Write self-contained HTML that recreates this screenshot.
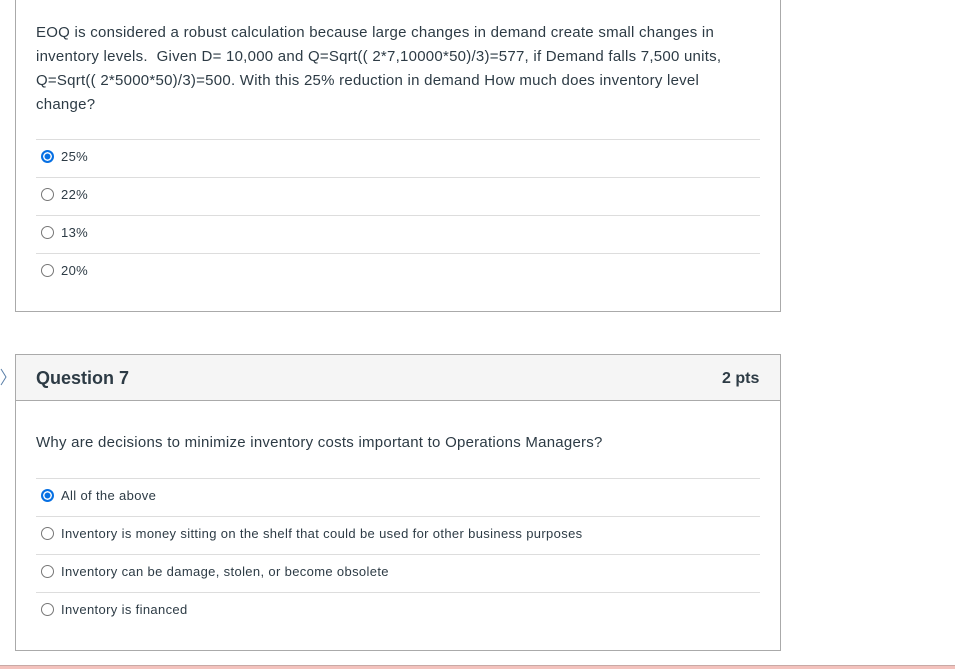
<!DOCTYPE html>
<html><head><style>
body{margin:0;width:955px;height:668px;background:#fff;position:relative;overflow:hidden;font-family:"Liberation Sans",sans-serif;color:#2d3b45}
.box{position:absolute;left:15px;width:764px;border:1px solid #aaa;background:#fff}
.t{position:absolute;left:36px;font-size:15px;white-space:nowrap;letter-spacing:0.25px}
.line{position:absolute;left:36px;width:724px;height:1px;background:#ddd}
.opt{position:absolute;left:41px;font-size:13px;white-space:nowrap;line-height:16px;letter-spacing:0.35px}
.r{display:inline-block;width:13px;height:13px;border:1px solid #777;border-radius:50%;vertical-align:-2px;margin-right:7px;box-sizing:border-box}
.r.on{border:2px solid #0770e3;background:#0770e3;box-shadow:inset 0 0 0 1.5px #fff}
</style></head><body>
<div class="box" style="top:-2px;height:312px"></div>
<div class="t" style="top:21px;line-height:24px">EOQ is considered a robust calculation because large changes in demand create small changes in<br>inventory levels.&nbsp; Given D= 10,000 and Q=Sqrt(( 2*7,10000*50)/3)=577, if Demand falls 7,500 units,<br>Q=Sqrt(( 2*5000*50)/3)=500. With this 25% reduction in demand How much does inventory level<br>change?</div>
<div class="line" style="top:139px"></div>
<div class="opt" style="top:149px"><span class="r on"></span>25%</div>
<div class="line" style="top:177px"></div>
<div class="opt" style="top:187px"><span class="r"></span>22%</div>
<div class="line" style="top:215px"></div>
<div class="opt" style="top:225px"><span class="r"></span>13%</div>
<div class="line" style="top:253px"></div>
<div class="opt" style="top:263px"><span class="r"></span>20%</div>

<svg style="position:absolute;left:0;top:368px" width="8" height="18"><path d="M1 1 L6 9 L1 17" stroke="#5a7fa8" fill="none" stroke-width="1"/></svg>
<div class="box" style="top:354px;height:295px"></div>
<div style="position:absolute;left:16px;top:355px;width:764px;height:45px;background:#f5f5f5;border-bottom:1px solid #aaa"></div>
<div class="t" style="top:367px;font-size:18px;font-weight:bold;line-height:22px;letter-spacing:0">Question 7</div>
<div class="t" style="top:369px;left:722px;font-size:16px;font-weight:bold;line-height:20px;letter-spacing:0">2 pts</div>
<div class="t" style="top:433px;line-height:20px">Why are decisions to minimize inventory costs important to Operations Managers?</div>
<div class="line" style="top:478px"></div>
<div class="opt" style="top:488px"><span class="r on"></span>All of the above</div>
<div class="line" style="top:516px"></div>
<div class="opt" style="top:526px"><span class="r"></span>Inventory is money sitting on the shelf that could be used for other business purposes</div>
<div class="line" style="top:554px"></div>
<div class="opt" style="top:564px"><span class="r"></span>Inventory can be damage, stolen, or become obsolete</div>
<div class="line" style="top:592px"></div>
<div class="opt" style="top:602px"><span class="r"></span>Inventory is financed</div>
<div style="position:absolute;left:0;top:665px;width:955px;height:3px;background:#f3c2bd;border-top:1px solid #c9a9a5"></div>
</body></html>
